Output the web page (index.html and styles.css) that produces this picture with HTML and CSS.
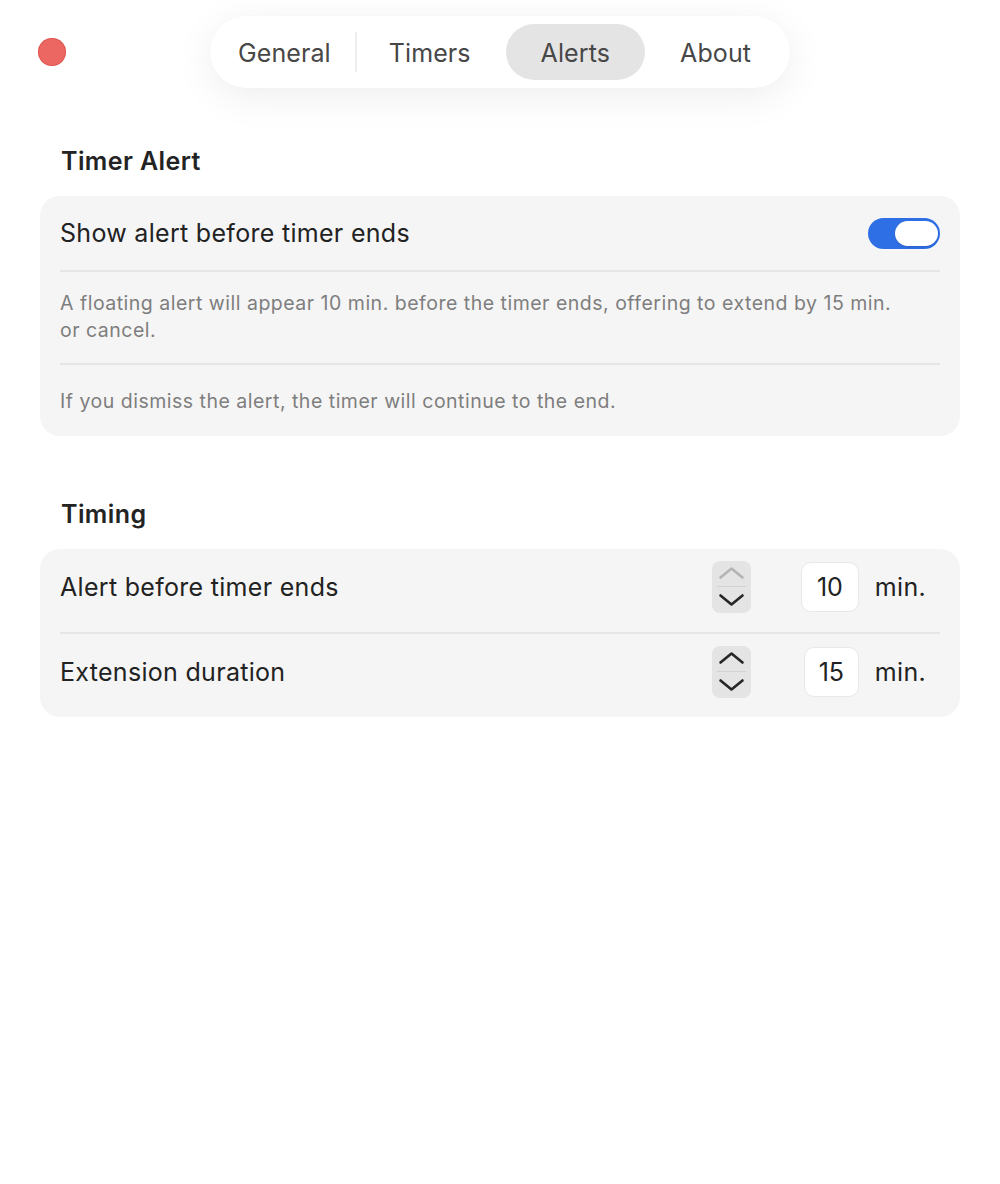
FILE: index.html
```html
<!DOCTYPE html>
<html lang="en">
<head>
<meta charset="utf-8">
<title>Alerts</title>
<link rel="stylesheet" href="styles.css">
</head>
<body>
<div class="window">
  <header class="titlebar">
    <span class="close-dot"></span>
    <nav class="tabs">
      <a class="tab tab-first">General</a>
      <span class="tab-sep"></span>
      <a class="tab tab-second">Timers</a>
      <a class="tab tab-active">Alerts</a>
      <a class="tab tab-last">About</a>
    </nav>
  </header>

  <main class="content">
    <h2 class="section-title">Timer Alert</h2>
    <section class="card">
      <div class="row">
        <span class="label">Show alert before timer ends</span>
        <span class="switch"><span class="knob"></span></span>
      </div>
      <div class="divider"></div>
      <p class="note note-first">A floating alert will appear 10 min. before the timer ends, offering to extend by 15 min. or cancel.</p>
      <div class="divider"></div>
      <p class="note note-last">If you dismiss the alert, the timer will continue to the end.</p>
    </section>

    <h2 class="section-title section-gap">Timing</h2>
    <section class="card">
      <div class="row row-tall">
        <span class="label">Alert before timer ends</span>
        <div class="controls">
          <span class="stepper">
            <svg width="39" height="52" viewBox="0 0 39 52">
              <path d="M8.5 16.5 L19.5 7.5 L30.5 16.5" fill="none" stroke="#b4b4b4" stroke-width="2.6" stroke-linecap="round" stroke-linejoin="round"/>
              <line x1="5" y1="25.5" x2="34" y2="25.5" stroke="#d2d2d2" stroke-width="1"/>
              <path d="M8.5 34.5 L19.5 43.5 L30.5 34.5" fill="none" stroke="#262626" stroke-width="2.6" stroke-linecap="round" stroke-linejoin="round"/>
            </svg>
          </span>
          <span class="field field-wide">10</span>
          <span class="unit">min.</span>
        </div>
      </div>
      <div class="divider"></div>
      <div class="row row-tall">
        <span class="label">Extension duration</span>
        <div class="controls">
          <span class="stepper">
            <svg width="39" height="52" viewBox="0 0 39 52">
              <path d="M8.5 16.5 L19.5 7.5 L30.5 16.5" fill="none" stroke="#262626" stroke-width="2.6" stroke-linecap="round" stroke-linejoin="round"/>
              <line x1="5" y1="25.5" x2="34" y2="25.5" stroke="#d2d2d2" stroke-width="1"/>
              <path d="M8.5 34.5 L19.5 43.5 L30.5 34.5" fill="none" stroke="#262626" stroke-width="2.6" stroke-linecap="round" stroke-linejoin="round"/>
            </svg>
          </span>
          <span class="field field-narrow">15</span>
          <span class="unit">min.</span>
        </div>
      </div>
    </section>
  </main>
</div>
</body>
</html>
```

FILE: styles.css
```css
* {
  box-sizing: border-box;
}

html, body {
  margin: 0;
  padding: 0;
  background: #ffffff;
}

body {
  font-family: Inter, "Liberation Sans", sans-serif;
  color: #222222;
  -webkit-font-smoothing: antialiased;
}

.window {
  width: 1000px;
  min-height: 1184px;
}

/* Title bar with the close button and the segmented tab strip */
.titlebar {
  position: relative;
  height: 88px;
  padding-top: 16px;
  display: flex;
  justify-content: center;
}

.close-dot {
  position: absolute;
  left: 38px;
  top: 38px;
  width: 28px;
  height: 28px;
  border-radius: 50%;
  background: #ec6762;
  box-shadow: inset 0 0 0 1px rgba(200, 70, 65, 0.45);
}

.tabs {
  display: flex;
  align-items: center;
  height: 72px;
  padding: 8px;
  border-radius: 36px;
  background: #ffffff;
  box-shadow: 0 8px 40px rgba(0, 0, 0, 0.07), 0 0 2px rgba(0, 0, 0, 0.03);
}

.tab {
  display: flex;
  align-items: center;
  height: 56px;
  padding: 2px 35px 0;
  border-radius: 28px;
  font-size: 25px;
  color: #474747;
  letter-spacing: 0.1px;
}

.tab-first {
  padding-left: 20px;
  padding-right: 24px;
}

.tab-second {
  padding-left: 32px;
}

.tab-last {
  padding-right: 31px;
}

.tab-sep {
  width: 2px;
  height: 40px;
  background: #eeeeee;
}

.tab-active {
  background: #e4e4e4;
}

/* Settings content */
.content {
  padding: 0 40px;
}

.section-title {
  margin: 58px 0 20px;
  padding-left: 21px;
  font-size: 25px;
  line-height: 30px;
  font-weight: 600;
  letter-spacing: 0.4px;
  color: #232323;
}

.section-gap {
  margin-top: 63px;
}

.card {
  background: #f5f5f5;
  border-radius: 20px;
  padding: 0 20px;
}

.row {
  display: flex;
  align-items: center;
  justify-content: space-between;
  height: 74px;
}

/* Stepper rows sit a little above centre */
.row-tall {
  height: 83px;
  padding-bottom: 8px;
}

.label {
  font-size: 25px;
  letter-spacing: 0.3px;
  color: #222222;
}

.divider {
  height: 2px;
  background: #e6e6e6;
}

.note {
  margin: 0;
  font-size: 19.5px;
  line-height: 27px;
  color: #7e7e7e;
  max-width: 840px;
  letter-spacing: 0.5px;
}

.note-first {
  padding: 18px 0 19px;
}

.note-last {
  padding: 23px 0 21px;
}

/* Toggle switch, on */
.switch {
  display: flex;
  align-items: center;
  justify-content: flex-end;
  width: 72px;
  height: 31px;
  padding: 0 2px;
  border-radius: 16px;
  background: #2f6fe6;
}

.knob {
  width: 43px;
  height: 25px;
  border-radius: 13px;
  background: #ffffff;
  box-shadow: 0 1px 2px rgba(0, 0, 0, 0.15);
}

/* Stepper, value field and unit */
.controls {
  display: flex;
  align-items: center;
  padding-right: 14px;
}

.stepper {
  display: block;
  width: 39px;
  height: 52px;
  border-radius: 8px;
  background: #e4e4e4;
}

.stepper svg {
  display: block;
}

.field {
  display: flex;
  align-items: center;
  justify-content: center;
  height: 50px;
  margin-left: 50px;
  border: 1px solid #e8e8e8;
  border-radius: 10px;
  background: #ffffff;
  font-size: 25px;
  color: #222222;
}

.field-wide {
  width: 58px;
}

.field-narrow {
  width: 55px;
  margin-left: 53px;
}

.unit {
  margin-left: 16px;
  font-size: 25px;
  letter-spacing: 0.3px;
  color: #222222;
}
```
